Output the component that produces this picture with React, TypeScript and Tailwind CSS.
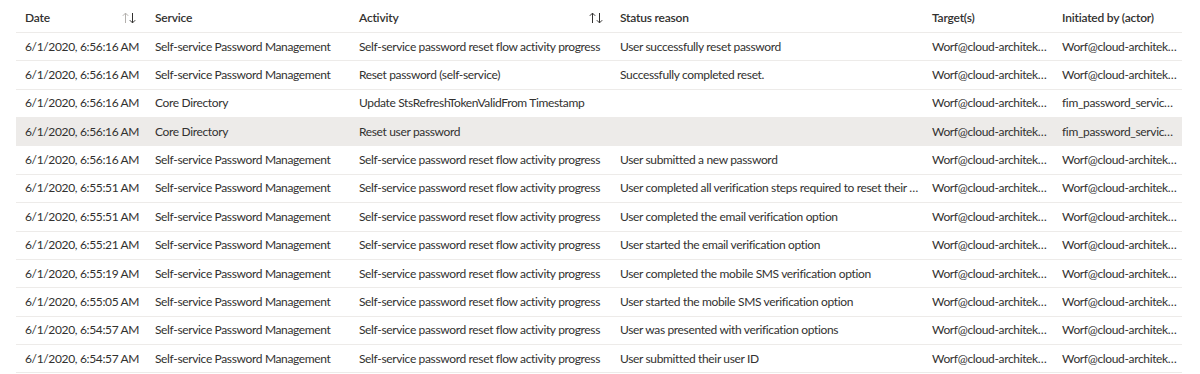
import { ReactElement } from 'react'

type Row = {
  date: string
  service: string
  activity: string
  status: string
  target: string
  actor: string
}

const SSPR = 'Self-service Password Management'
const FLOW = 'Self-service password reset flow activity progress'
const WORF = 'Worf@cloud-architekt.net'

const rows: Row[] = [
  { date: '6/1/2020, 6:56:16 AM', service: SSPR, activity: FLOW, status: 'User successfully reset password', target: WORF, actor: WORF },
  { date: '6/1/2020, 6:56:16 AM', service: SSPR, activity: 'Reset password (self-service)', status: 'Successfully completed reset.', target: WORF, actor: WORF },
  { date: '6/1/2020, 6:56:16 AM', service: 'Core Directory', activity: 'Update StsRefreshTokenValidFrom Timestamp', status: '', target: WORF, actor: 'fim_password_service@cloud-architekt.net' },
  { date: '6/1/2020, 6:56:16 AM', service: 'Core Directory', activity: 'Reset user password', status: '', target: WORF, actor: 'fim_password_service@cloud-architekt.net' },
  { date: '6/1/2020, 6:56:16 AM', service: SSPR, activity: FLOW, status: 'User submitted a new password', target: WORF, actor: WORF },
  { date: '6/1/2020, 6:55:51 AM', service: SSPR, activity: FLOW, status: 'User completed all verification steps required to reset their password', target: WORF, actor: WORF },
  { date: '6/1/2020, 6:55:51 AM', service: SSPR, activity: FLOW, status: 'User completed the email verification option', target: WORF, actor: WORF },
  { date: '6/1/2020, 6:55:21 AM', service: SSPR, activity: FLOW, status: 'User started the email verification option', target: WORF, actor: WORF },
  { date: '6/1/2020, 6:55:19 AM', service: SSPR, activity: FLOW, status: 'User completed the mobile SMS verification option', target: WORF, actor: WORF },
  { date: '6/1/2020, 6:55:05 AM', service: SSPR, activity: FLOW, status: 'User started the mobile SMS verification option', target: WORF, actor: WORF },
  { date: '6/1/2020, 6:54:57 AM', service: SSPR, activity: FLOW, status: 'User was presented with verification options', target: WORF, actor: WORF },
  { date: '6/1/2020, 6:54:57 AM', service: SSPR, activity: FLOW, status: 'User submitted their user ID', target: WORF, actor: WORF },
]

const cols = 'grid w-[1166px] grid-cols-[130px_204px_261px_312px_130px_129px]'

const SortIcon = ({ upDim }: { upDim?: boolean }): ReactElement => (
  <svg width="14" height="12" viewBox="0 0 14 12" fill="none" strokeWidth="1">
    <g stroke={upDim ? '#b3b0ad' : '#323130'}>
      <path d="M3.5 11V1.2M0.8 3.8L3.5 1.1L6.2 3.8" />
    </g>
    <g stroke="#323130">
      <path d="M10.5 1V10.8M7.8 8.2L10.5 10.9L13.2 8.2" />
    </g>
  </svg>
)

const Cell = ({ children }: { children: string }): ReactElement => (
  <div className="pl-[9px] pr-[3px] truncate">{children}</div>
)

const App = (): ReactElement => {
  return (
    <div
      className="w-[1200px] h-[374px] bg-white pl-4 text-[12px] tracking-[-0.35px] text-[#323130] overflow-hidden"
      style={{ fontFamily: '"Segoe UI", Lato, sans-serif' }}
    >
      <div className={`${cols} h-[33px] items-center pt-[4px] border-b border-[#edebe9] font-semibold tracking-[-0.2px] whitespace-nowrap`}>
        <div className="pl-[9px] flex items-center justify-between pr-[10px]">
          <span>Date</span>
          <SortIcon upDim />
        </div>
        <div className="pl-[9px]">Service</div>
        <div className="pl-[9px] flex items-center justify-between pr-[8px]">
          <span>Activity</span>
          <SortIcon />
        </div>
        <div className="pl-[9px]">Status reason</div>
        <div className="pl-[9px]">Target(s)</div>
        <div className="pl-[9px]">Initiated by (actor)</div>
      </div>
      {rows.map((r, i) => (
        <div
          key={i}
          className={`${cols} h-[28.36px] items-center border-b border-[#edebe9] ${i === 3 ? 'bg-[#edebe9]' : ''}`}
        >
          <Cell>{r.date}</Cell>
          <Cell>{r.service}</Cell>
          <Cell>{r.activity}</Cell>
          <Cell>{r.status}</Cell>
          <Cell>{r.target}</Cell>
          <Cell>{r.actor}</Cell>
        </div>
      ))}
    </div>
  )
}

export default App
